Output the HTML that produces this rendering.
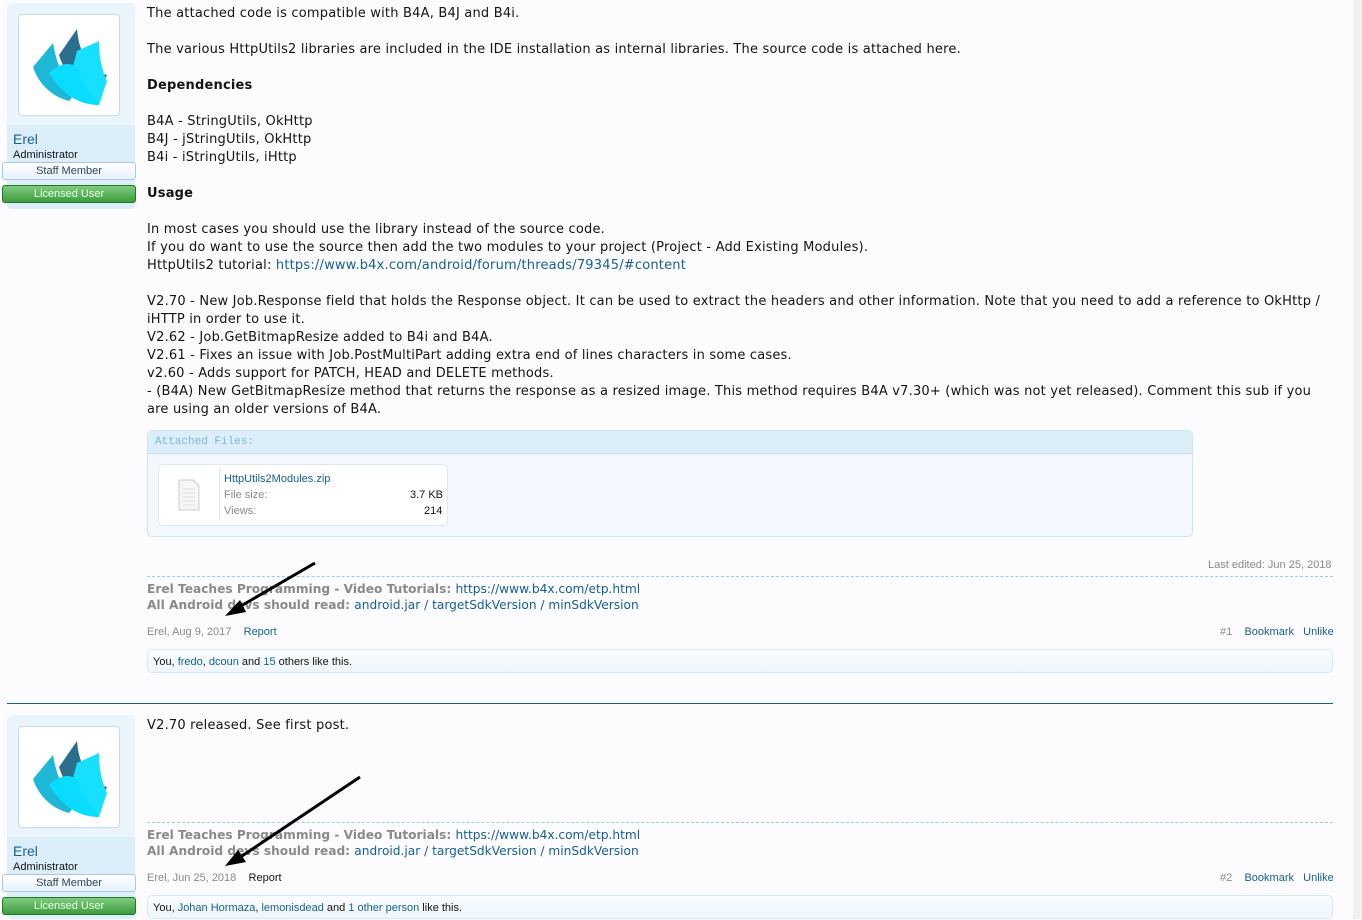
<!DOCTYPE html>
<html><head><meta charset="utf-8"><style>
body{margin:0;width:1362px;height:919px;background:#fcfcff;position:relative;overflow:hidden;font-family:"DejaVu Sans",Verdana,sans-serif;color:#141414}
.strip{position:absolute;left:1353px;top:0;width:9px;height:919px;background:#f0f0f0}
.a{position:absolute}
.t{font-size:13px;line-height:18px;white-space:nowrap;letter-spacing:0.2px}
.s{font-family:"Liberation Sans",Tahoma,sans-serif;font-size:11px;white-space:nowrap}
a{color:#176093;text-decoration:none}
.ub{position:absolute;left:7px;width:128px;background:#dceefa;border-radius:5px}
.av{position:absolute;left:11px;width:100px;height:100px;background:#fff;border:1px solid #c4dcee;border-radius:4px}
.staff{position:absolute;left:2px;width:132px;height:16px;border:1px solid #a9c9e0;background:linear-gradient(#fff,#e6f1fa);border-radius:3px;text-align:center;font-family:"Liberation Sans",sans-serif;font-size:11px;line-height:16px;color:#2b485c}
.lic{position:absolute;left:2px;width:132px;height:16px;border:1px solid #1e7a1e;background:linear-gradient(#7fcb7f,#3d9c3d);border-radius:3px;text-align:center;font-family:"Liberation Sans",sans-serif;font-size:11px;line-height:16px;color:#e9ffe9}
.sig{font-weight:bold;color:#8a8a8a;font-size:12.2px;white-space:nowrap}
.sig a{font-weight:normal}
.dash{position:absolute;left:147px;width:1186px;border-top:1px dashed #9ccbe6}
.likes{position:absolute;left:147px;width:1186px;height:24px;border:1px solid #d6e8f5;border-radius:5px;background:linear-gradient(#fbfdff,#eef6fc);font-family:"Liberation Sans",sans-serif;font-size:11px;line-height:24px;padding-left:5px;box-sizing:border-box}
</style></head><body>
<div class="strip"></div>

<div class="ub" style="top:3px;height:206px;background:linear-gradient(#eaf4fc 0,#eaf4fc 122px,#dceefa 122px)"></div>
<div class="av" style="left:18px;top:14px"><svg width="100" height="100" viewBox="0 0 100 100"><path d="M14 52 L34 28 C38 50 44 66 60 74 L50 86 C34 82 20 70 14 52Z" fill="#1fb7d6"/><path d="M40 40 L58 14 C60 38 70 56 88 60 L78 80 C60 72 46 60 40 40Z" fill="#2b6f8f"/><path d="M58 36 L80 26 C80 44 84 58 88 66 L80 90 C64 86 54 78 50 66Z" fill="#17e0ff"/><path d="M30 58 C40 48 56 44 60 58 C64 70 74 80 80 90 C60 90 44 80 30 58Z" fill="#0adcff"/></svg></div>
<div class="a" style="left:13px;top:131px;font-family:'Liberation Sans',sans-serif;font-size:14px;color:#176093">Erel</div>
<div class="a s" style="left:13px;top:149px;color:#141414">Administrator</div>
<div class="staff" style="top:162px">Staff Member</div>
<div class="lic" style="top:185px">Licensed User</div>

<div class="a t" style="left:147px;top:5px">The attached code is compatible with B4A, B4J and B4i.</div>
<div class="a t" style="left:147px;top:41px">The various HttpUtils2 libraries are included in the IDE installation as internal libraries. The source code is attached here.</div>
<div class="a t" style="left:147px;top:77px;font-weight:bold">Dependencies</div>
<div class="a t" style="left:147px;top:113px">B4A - StringUtils, OkHttp<br>B4J - jStringUtils, OkHttp<br>B4i - iStringUtils, iHttp</div>
<div class="a t" style="left:147px;top:185px;font-weight:bold">Usage</div>
<div class="a t" style="left:147px;top:221px">In most cases you should use the library instead of the source code.<br>If you do want to use the source then add the two modules to your project (Project - Add Existing Modules).<br>HttpUtils2 tutorial: <a>https://www.b4x.com/android/forum/threads/79345/#content</a></div>
<div class="a t" style="left:147px;top:293px">V2.70 - New Job.Response field that holds the Response object. It can be used to extract the headers and other information. Note that you need to add a reference to OkHttp /<br>iHTTP in order to use it.<br>V2.62 - Job.GetBitmapResize added to B4i and B4A.<br>V2.61 - Fixes an issue with Job.PostMultiPart adding extra end of lines characters in some cases.<br>v2.60 - Adds support for PATCH, HEAD and DELETE methods.<br>- (B4A) New GetBitmapResize method that returns the response as a resized image. This method requires B4A v7.30+ (which was not yet released). Comment this sub if you<br>are using an older versions of B4A.</div>

<div class="a" style="left:147px;top:430px;width:1044px;height:105px;border:1px solid #cfe3f2;border-radius:5px;background:#f2f8fd"></div>
<div class="a" style="left:148px;top:431px;width:1044px;height:22px;background:#dceefa;border-bottom:1px solid #c4dcee;border-radius:5px 5px 0 0"></div>
<div class="a" style="left:155px;top:436px;font-family:'Liberation Mono',monospace;font-size:11px;color:#7fb4d9">Attached Files:</div>
<div class="a" style="left:158px;top:464px;width:288px;height:60px;border:1px solid #dde9f3;border-radius:5px;background:#fff"></div>
<div class="a" style="left:219px;top:468px;height:52px;border-left:1px solid #dde9f3"></div>
<svg class="a" style="left:178px;top:479px" width="22" height="32"><path d="M1 1 H15 L21 7 V31 H1Z" fill="#f6f6f6" stroke="#ccc"/><path d="M5 10H17M5 14H17M5 18H17M5 22H17M5 26H17" stroke="#ddd"/></svg>
<div class="a s" style="left:224px;top:473px;color:#176093">HttpUtils2Modules.zip</div>
<div class="a s" style="left:224px;top:489px;color:#8a8a8a">File size:</div>
<div class="a s" style="left:410px;top:489px;color:#141414">3.7 KB</div>
<div class="a s" style="left:224px;top:505px;color:#8a8a8a">Views:</div>
<div class="a s" style="left:424px;top:505px;color:#141414">214</div>

<div class="a s" style="left:1208px;top:559px;color:#8a8a8a">Last edited: Jun 25, 2018</div>
<div class="dash" style="top:576px"></div>
<div class="a sig" style="left:147px;top:582px">Erel Teaches Programming - Video Tutorials: <a>https://www.b4x.com/etp.html</a></div>
<div class="a sig" style="left:147px;top:598px">All Android devs should read: <a>android.jar / targetSdkVersion / minSdkVersion</a></div>
<div class="a s" style="left:147px;top:626px;color:#8a8a8a">Erel, Aug 9, 2017 &nbsp;&nbsp; <a>Report</a></div>
<div class="a s" style="left:1220px;top:626px;color:#8a8a8a">#1 &nbsp;&nbsp; <a>Bookmark</a> &nbsp;&nbsp;<a>Unlike</a></div>
<div class="likes" style="top:649px">You, <a>fredo</a>, <a>dcoun</a> and <a>15</a> others like this.</div>

<div class="a" style="left:7px;top:703px;width:1326px;border-top:1px solid #176093"></div>
<svg class="a" style="left:220px;top:560px" width="100" height="60"><path d="M95 3 L14 50" stroke="#000" stroke-width="3"/><path d="M5 56 L20 40 L26 52Z" fill="#000"/></svg>

<div class="ub" style="top:715px;height:204px;background:linear-gradient(#eaf4fc 0,#eaf4fc 122px,#dceefa 122px)"></div>
<div class="av" style="left:18px;top:726px"><svg width="100" height="100" viewBox="0 0 100 100"><path d="M14 52 L34 28 C38 50 44 66 60 74 L50 86 C34 82 20 70 14 52Z" fill="#1fb7d6"/><path d="M40 40 L58 14 C60 38 70 56 88 60 L78 80 C60 72 46 60 40 40Z" fill="#2b6f8f"/><path d="M58 36 L80 26 C80 44 84 58 88 66 L80 90 C64 86 54 78 50 66Z" fill="#17e0ff"/><path d="M30 58 C40 48 56 44 60 58 C64 70 74 80 80 90 C60 90 44 80 30 58Z" fill="#0adcff"/></svg></div>
<div class="a" style="left:13px;top:843px;font-family:'Liberation Sans',sans-serif;font-size:14px;color:#176093">Erel</div>
<div class="a s" style="left:13px;top:861px;color:#141414">Administrator</div>
<div class="staff" style="top:874px">Staff Member</div>
<div class="lic" style="top:897px">Licensed User</div>

<div class="a t" style="left:147px;top:717px">V2.70 released. See first post.</div>
<div class="dash" style="top:822px"></div>
<div class="a sig" style="left:147px;top:828px">Erel Teaches Programming - Video Tutorials: <a>https://www.b4x.com/etp.html</a></div>
<div class="a sig" style="left:147px;top:844px">All Android devs should read: <a>android.jar / targetSdkVersion / minSdkVersion</a></div>
<div class="a s" style="left:147px;top:872px;color:#8a8a8a">Erel, Jun 25, 2018 &nbsp;&nbsp; <a style="color:#141414">Report</a></div>
<div class="a s" style="left:1220px;top:872px;color:#8a8a8a">#2 &nbsp;&nbsp; <a>Bookmark</a> &nbsp;&nbsp;<a>Unlike</a></div>
<div class="likes" style="top:895px">You, <a>Johan Hormaza</a>, <a>lemonisdead</a> and <a>1 other person</a> like this.</div>
<svg class="a" style="left:220px;top:774px" width="145" height="96"><path d="M140 3 L16 86" stroke="#000" stroke-width="3"/><path d="M5 92 L18 76 L26 88Z" fill="#000"/></svg>
</body></html>
